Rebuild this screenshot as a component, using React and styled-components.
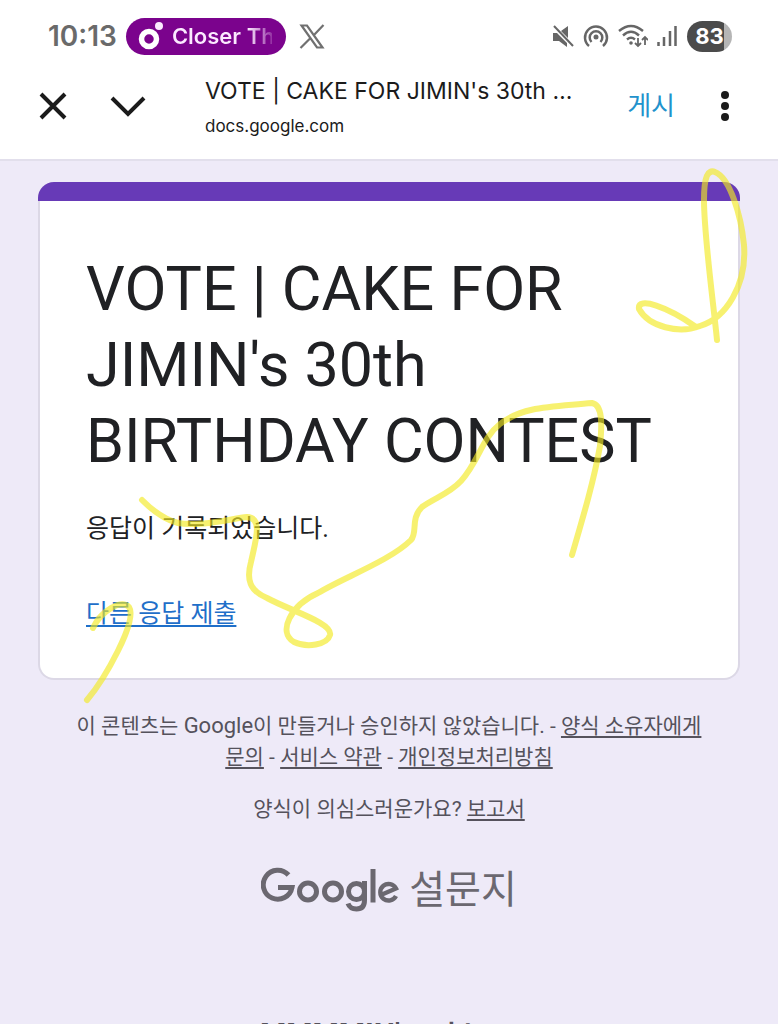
import React from 'react';
import styled, { createGlobalStyle } from 'styled-components';

const Global = createGlobalStyle`
  *, *::before, *::after { box-sizing: border-box; }
  html, body { margin: 0; background: #eeeaf8; }
  body { font-family: Roboto, 'Noto Sans CJK KR', sans-serif; color: #202124; }
  button { font: inherit; border: 0; padding: 0; background: none; color: inherit; cursor: pointer; }
  svg { display: block; flex: none; }
`;

const Page = styled.div`
  position: relative;
  height: 100vh;
  overflow: hidden;
`;

const Top = styled.header`
  background: #fff;
  border-bottom: 2px solid #e2dfec;
`;

const StatusBar = styled.div`
  display: flex;
  align-items: center;
  justify-content: space-between;
  height: 72px;
  padding: 0 46px 0 48px;
  color: #666;
`;

const StatusGroup = styled.div`
  display: flex;
  align-items: center;
  gap: 9px;
`;

const Clock = styled.time`
  font: 600 28px/32px Inter, sans-serif;
  color: #6a6a6a;
`;

const NowPlaying = styled.div`
  display: flex;
  align-items: center;
  gap: 8px;
  width: 160px;
  height: 37px;
  margin-right: 4px;
  padding-left: 12px;
  border-radius: 20px;
  background: #7b038d;
`;

const Track = styled.span`
  width: 100px;
  overflow: hidden;
  white-space: nowrap;
  font: 600 22px/32px Inter, sans-serif;
  color: transparent;
  background: linear-gradient(90deg, #fbeaff 76%, #7b038d 106%);
  background-clip: text;
`;

const Battery = styled.div`
  width: 45px;
  height: 31px;
  border-radius: 16px;
  background: linear-gradient(90deg, #4b4b4b 83%, #b5b5b5 83%);
  color: #fff;
  font: 700 22px/31px Inter, sans-serif;
  text-align: center;
`;

const TabBar = styled.nav`
  display: flex;
  align-items: center;
  height: 87px;
  padding: 0 43px 20px 38px;
  color: #1b1b1b;
`;

const IconButton = styled.button`
  display: grid;
  place-items: center;
  width: ${({ $width }) => $width}px;
  height: 40px;
`;

const PageInfo = styled.div`
  flex: 1;
  min-width: 0;
  margin: 0 48px 0 17px;
  padding-top: 4px;
  font-family: Inter, sans-serif;
`;

const PageName = styled.div`
  font-size: 23px;
  line-height: 36px;
  overflow: hidden;
  white-space: nowrap;
  text-overflow: ellipsis;
`;

const Host = styled.div`
  font-size: 17px;
  line-height: 34px;
`;

const Publish = styled.button`
  font-size: 26px;
  line-height: 36px;
  color: #2292cc;
  margin-right: 40px;
`;

const Main = styled.main`
  padding: 21px 38px 0;
`;

const Card = styled.section`
  border: 2px solid #dcd8e6;
  border-top: 0;
  border-radius: 16px;
  background: #fff;
`;

const Accent = styled.div`
  height: 19px;
  margin: 0 -2px;
  border-radius: 16px 16px 0 0;
  background: #673ab7;
`;

const CardBody = styled.div`
  padding: 50px 46px 46px;
`;

const Title = styled.h1`
  margin: 0 0 31px;
  font-size: 61px;
  line-height: 76px;
  font-weight: 400;
`;

const Message = styled.p`
  margin: 0 0 48px;
  font-size: 25px;
  line-height: 37px;
`;

const Another = styled.a`
  display: block;
  width: fit-content;
  font-size: 25px;
  line-height: 37px;
  color: #1f6fc9;
  text-decoration-thickness: 2px;
  text-underline-offset: 3px;
`;

const Footer = styled.footer`
  padding: 30px 28px 0;
  text-align: center;
  color: #55525c;
`;

const Notice = styled.p`
  margin: 0 0 21px;
  font-size: 21px;
  line-height: 31px;
`;

const Latin = styled.span`
  font-size: 22px;
`;

const NoticeLink = styled.a`
  color: inherit;
  text-decoration-thickness: 2px;
  text-underline-offset: 3px;
`;

const Brand = styled.a`
  display: flex;
  justify-content: center;
  align-items: center;
  gap: 10px;
  margin-top: 37px;
  color: #6b6870;
  text-decoration: none;
  font-size: 39px;
  line-height: 56px;
`;

const NextHeading = styled.h2`
  display: flex;
  justify-content: center;
  align-items: baseline;
  gap: 18px;
  margin: 96px 0 0;
  font-size: 30px;
  line-height: 40px;
  font-weight: 700;
`;

const Hangul = styled.span`
  font-size: 26px;
`;

const Ink = styled.svg`
  position: absolute;
  top: 0;
  left: 0;
  pointer-events: none;
  fill: none;
  stroke: #f2e91f;
  stroke-opacity: 0.64;
  stroke-width: 6;
  stroke-linecap: round;
  stroke-linejoin: round;
`;

const GoogleLogo = () => (
  <svg width="138" height="46" viewBox="0 0 138 46" fill="none" stroke="currentColor" strokeWidth="5" role="img" aria-label="Google">
    <g transform="translate(0 1)">
      <path d="M27.500 7A14.500 14.500 0 1 0 31 19.500H17" />
      <circle cx="47" cy="23.500" r="8.500" />
      <circle cx="72" cy="23.500" r="8.500" />
      <circle cx="95.500" cy="23.500" r="8" />
      <path d="M103.500 13V32Q103.500 41 95.500 41Q89 41 87 35.500M112 1V34.500" />
      <path d="M121 26.500L135 20.500A8.300 8.300 0 1 0 135 28" strokeWidth="4.400" />
    </g>
  </svg>
);

export default function App() {
  return (
    <>
      <Global />
      <Page>
        <Top>
          <StatusBar>
            <StatusGroup>
              <Clock>10:13</Clock>
              <NowPlaying>
                <svg width="26" height="28" viewBox="0 0 26 28" fill="none">
                  <circle cx="11" cy="17" r="7.500" stroke="#fff" strokeWidth="5.500" />
                  <circle cx="21" cy="4" r="4" fill="#fbeaff" />
                </svg>
                <Track>Closer Than</Track>
              </NowPlaying>
              <svg width="26" height="25" viewBox="0 0 26 25" fill="none" stroke="#707070" strokeWidth="2.200">
                <path d="M2.500 1.500h5.500L23.500 23.500h-5.500ZM24.500 1L14.500 11.500M11.500 14L1.500 24" />
              </svg>
            </StatusGroup>
            <StatusGroup>
              <svg width="24" height="24" viewBox="0 0 24 24" fill="#666">
                <path d="M3 9h4l10 10v4l-8-6H3ZM11 7l7-5v12Z" />
                <path d="M4 2l19 20" stroke="#666" strokeWidth="2" />
              </svg>
              <svg width="26" height="24" viewBox="0 0 26 24" fill="none" stroke="#666" strokeWidth="2.500">
                <path d="M6 22A11 11 0 1 1 20 22M8.500 18A6.300 6.300 0 1 1 17.500 18" />
                <circle cx="13" cy="13" r="2.500" fill="#666" stroke="none" />
              </svg>
              <svg width="30" height="24" viewBox="0 0 30 24" fill="none" stroke="#666" strokeWidth="2.400">
                <path d="M1 7Q13-3 25 7M5 11.500Q13 4 21 11.500M9 15.500Q13 12 17 15.500" />
                <circle cx="13" cy="19" r="1.800" fill="#666" stroke="none" />
                <path d="M20 14v8M17 19l3 3 3-3M27 21v-8M24 16l3-3 3 3" strokeWidth="1.800" />
              </svg>
              <svg width="21" height="24" viewBox="0 0 21 24" stroke="#666" strokeWidth="2.500">
                <path d="M1.500 18v4M7 13v9M13 7v15M18.500 2v20" />
              </svg>
              <Battery>83</Battery>
            </StatusGroup>
          </StatusBar>
          <TabBar>
            <IconButton $width={30} aria-label="닫기">
              <svg width="28" height="28" viewBox="0 0 28 28" stroke="currentColor" strokeWidth="4"><path d="M2 2l24 24M26 2L2 26" /></svg>
            </IconButton>
            <IconButton $width={120} aria-label="최소화">
              <svg width="36" height="22" viewBox="0 0 36 22" fill="none" stroke="currentColor" strokeWidth="4"><path d="M2 3l16 16L34 3" /></svg>
            </IconButton>
            <PageInfo>
              <PageName>VOTE | CAKE FOR JIMIN's 30th BIRTHDAY CONTEST</PageName>
              <Host>docs.google.com</Host>
            </PageInfo>
            <Publish>게시</Publish>
            <IconButton $width={20} aria-label="메뉴">
              <svg width="10" height="32" viewBox="0 0 10 32" fill="currentColor"><circle cx="5" cy="5" r="4" /><circle cx="5" cy="16" r="4" /><circle cx="5" cy="27" r="4" /></svg>
            </IconButton>
          </TabBar>
        </Top>
        <Main>
          <Card>
            <Accent />
            <CardBody>
              <Title>VOTE | CAKE FOR JIMIN's 30th BIRTHDAY CONTEST</Title>
              <Message>응답이 기록되었습니다.</Message>
              <Another href="#again">다른 응답 제출</Another>
            </CardBody>
          </Card>
          <Footer>
            <Notice>
              이 콘텐츠는 <Latin>Google</Latin>이 만들거나 승인하지 않았습니다. - <NoticeLink href="#owner">양식 소유자에게 문의</NoticeLink> - <NoticeLink href="#terms">서비스 약관</NoticeLink> - <NoticeLink href="#privacy">개인정보처리방침</NoticeLink>
            </Notice>
            <Notice>양식이 의심스러운가요? <NoticeLink href="#report">보고서</NoticeLink></Notice>
            <Brand href="#forms"><GoogleLogo />설문지</Brand>
            <NextHeading>MMMMIN's <Hangul>되스 Oll</Hangul></NextHeading>
          </Footer>
        </Main>
        <Ink width="778" height="1024" viewBox="0 0 778 1024" aria-hidden="true">
          <path d="M717 340C713 300 704 235 704 200C704 176 708 169 715 172C730 178 741 215 744 245C747 285 726 318 700 326C679 334 649 327 639 309C637 296 668 307 696 327" />
          <path d="M142 500C155 513 166 520 178 523C198 527 230 519 247 517C263 518 256 539 251 562C246 580 250 591 267 598C291 611 333 623 330 635C327 645 307 648 294 642C277 632 291 605 318 593C345 577 391 560 411 540C418 532 410 519 422 507C434 498 449 494 461 481C479 461 482 438 500 424C523 406 552 407 592 403C603 405 602 425 600 446C594 480 584 514 572 555" />
          <path d="M93 628C101 611 121 599 129 607C138 621 104 680 87 700" />
        </Ink>
      </Page>
    </>
  );
}
